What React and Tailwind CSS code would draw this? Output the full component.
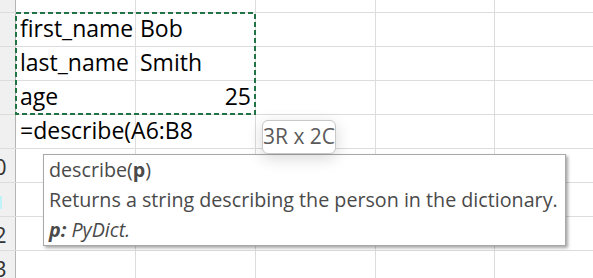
import React from "react";

const rows = [
  { h: "h-[13px]", label: null, a: null, b: null },
  { h: "h-[34px]", label: null, a: "first_name", b: "Bob" },
  { h: "h-[34px]", label: null, a: "last_name", b: "Smith" },
  { h: "h-[34px]", label: null, a: "age", b: "25", bRight: true },
  { h: "h-[34px]", label: null, a: "=describe(A6:B8", formula: true },
  { h: "h-[34px]", label: "0" },
  { h: "h-[34px]", label: "cyan" },
  { h: "h-[34px]", label: "2" },
  { h: "h-[28px]", label: "3", last: true },
];

export default function App() {
  return (
    <div className="relative w-[593px] h-[278px] overflow-hidden bg-white font-['Open_Sans',sans-serif]">
      <div className="flex flex-col">
        {rows.map((r, i) => (
          <div key={i} className={`flex ${r.h} ${r.last ? "" : "border-b border-[#dcdcdc]"}`}>
            <div className="w-[16px] shrink-0 bg-[#f0f0f0] border-r border-[#b4b4b4] relative overflow-hidden">
              {r.label === "cyan" ? (
                <div className="absolute left-0 top-[13px] w-[2px] h-[13px] bg-[#bff3f7]" />
              ) : r.label ? (
                <span className="absolute left-[-6px] top-[1px] text-[22px] leading-[33px] text-[#333]">{r.label}</span>
              ) : null}
            </div>
            <div className="w-[120px] shrink-0 border-r border-[#dcdcdc] relative">
              {r.a && (
                <span className="absolute left-[4px] top-[-1px] whitespace-nowrap text-[23px] leading-[33px] text-black z-10">
                  {r.a}
                </span>
              )}
            </div>
            <div className="w-[120px] shrink-0 border-r border-[#dcdcdc] relative">
              {r.b && (
                <span className={`absolute top-[-1px] whitespace-nowrap text-[23px] leading-[33px] text-black ${r.bRight ? "right-[4px]" : "left-[4px]"}`}>
                  {r.b}
                </span>
              )}
            </div>
            <div className="w-[120px] shrink-0 border-r border-[#dcdcdc]" />
            <div className="w-[119px] shrink-0 border-r border-[#dcdcdc]" />
            <div className="flex-1" />
          </div>
        ))}
      </div>

      {/* copy marquee */}
      <svg className="absolute left-[15px] top-[12px]" width="241" height="103" viewBox="0 0 241 103">
        <rect x="1" y="1" width="239" height="101" fill="none" stroke="#217346" strokeWidth="2" strokeDasharray="5 3" />
      </svg>

      {/* tooltip */}
      <div className="absolute left-[43px] top-[154px] w-[523px] h-[92px] bg-white border border-[#a8a8a8] shadow-[2px_2px_3px_rgba(0,0,0,0.35)] pl-[5px] pt-0 text-[19.7px] leading-[30px] text-[#4a4a4a] font-['Open_Sans',sans-serif]">
        <div className="whitespace-nowrap">
          describe(<span className="font-bold">p</span>)
        </div>
        <div className="whitespace-nowrap">Returns a string describing the person in the dictionary.</div>
        <div className="whitespace-nowrap italic">
          <span className="font-bold">p:</span> PyDict.
        </div>
      </div>

      {/* size badge */}
      <div className="absolute left-[262px] top-[120px] w-[74px] h-[34px] rounded-[6px] border border-[#c8c8c8] bg-white shadow-[0_4px_16px_rgba(0,0,0,0.16)] flex items-center justify-center text-[21px] text-[#5a5a5a] whitespace-nowrap">
        3R x 2C
      </div>
    </div>
  );
}
